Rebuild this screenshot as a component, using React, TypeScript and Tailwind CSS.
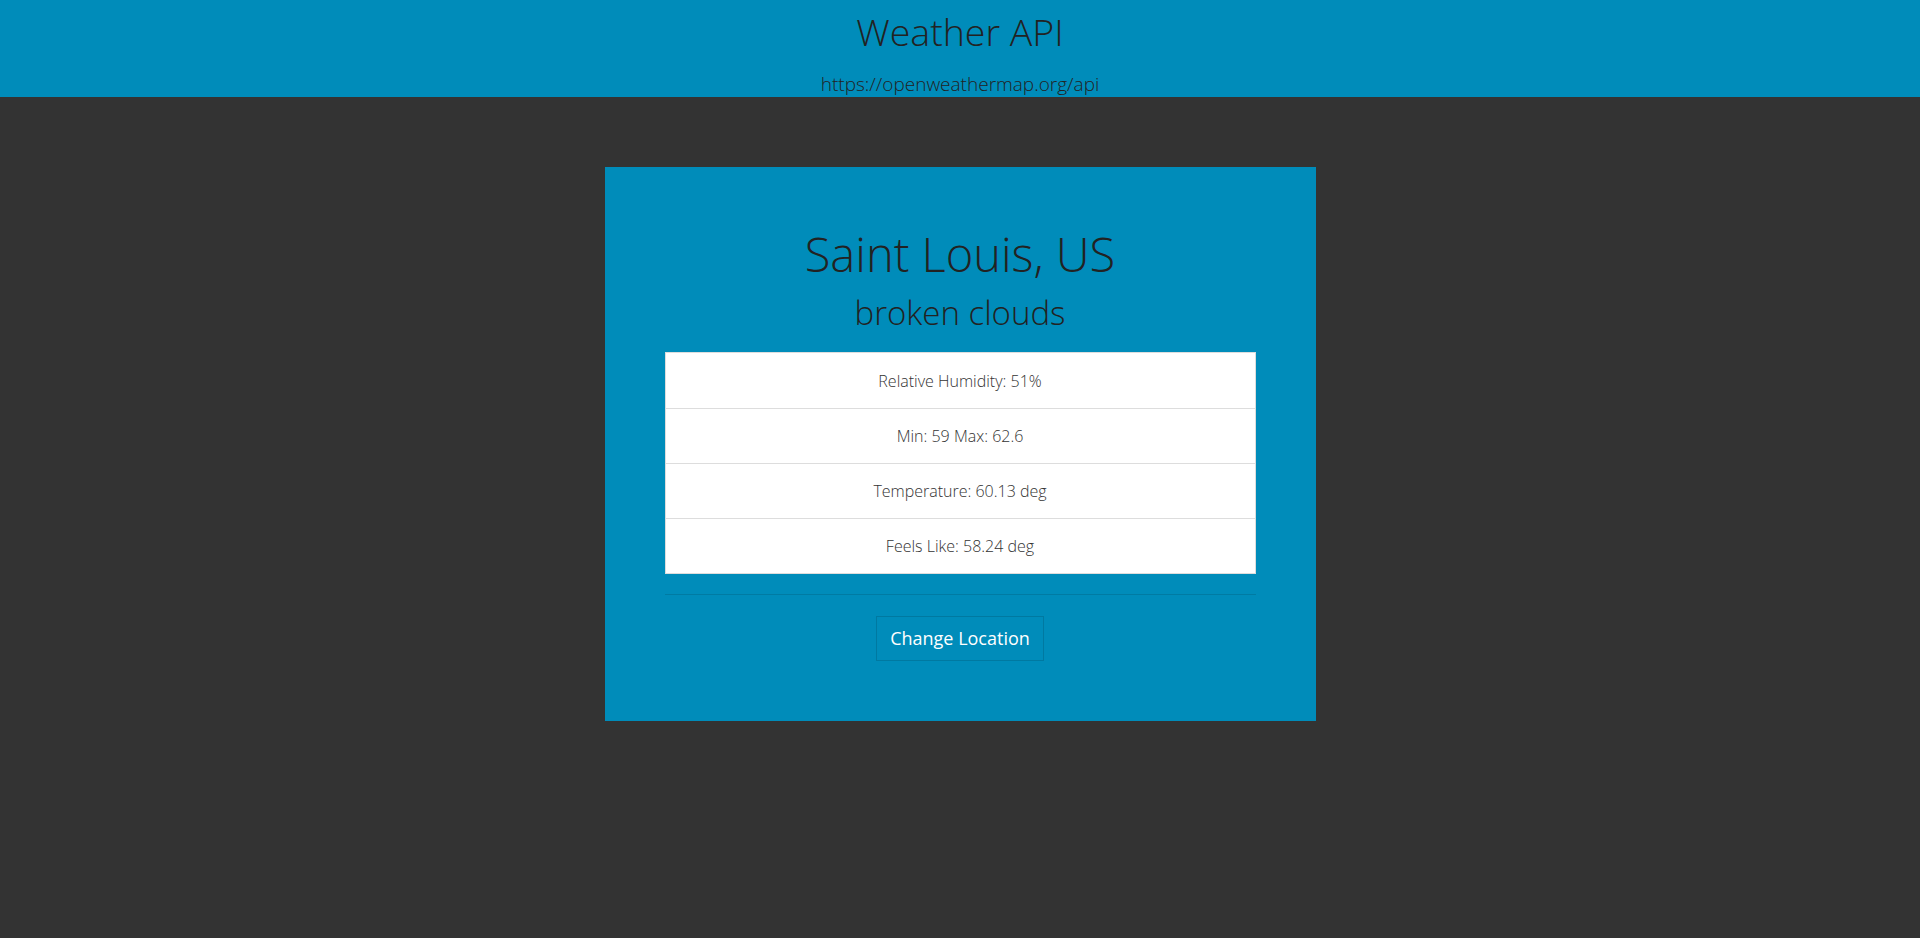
import React from "react";

export default function App() {
  const rows = [
    "Relative Humidity: 51%",
    "Min: 59 Max: 62.6",
    "Temperature: 60.13 deg",
    "Feels Like: 58.24 deg",
  ];
  return (
    <div
      className="min-h-screen w-full bg-[#333333]"
      style={{ fontFamily: '"Open Sans", "Liberation Sans", sans-serif' }}
    >
      <header className="h-[97px] overflow-hidden bg-[#008cba] pt-[12px] text-center text-[#222222]">
        <h1 className="text-[37.5px] font-light leading-[40px]">Weather API</h1>
        <p className="mt-[20px] text-[19px] font-light leading-[25px]">
          https://openweathermap.org/api
        </p>
      </header>
      <main className="pt-[70px]">
        <div className="mx-auto w-[711px] bg-[#008cba] px-[60px] pt-[61px] pb-[60px] text-center">
          <h2 className="text-[47px] font-light leading-[53px] text-[#222222]">
            Saint Louis, US
          </h2>
          <h3 className="mt-[14px] text-[33px] font-light leading-[35px] text-[#222222]">
            broken clouds
          </h3>
          <ul className="mt-[22px] border border-[#dddddd] bg-white">
            {rows.map((r, i) => (
              <li
                key={r}
                className={`flex h-[55px] items-center justify-center text-[16px] font-light text-[#333333] ${
                  i > 0 ? "border-t border-[#dddddd]" : ""
                }`}
              >
                {r}
              </li>
            ))}
          </ul>
          <hr className="mt-[20px] border-0 border-t border-[#007ba3]" />
          <div className="mt-[21px] flex justify-center">
            <button className="h-[45px] border border-[#0079a1] bg-[#008cba] px-[13px] text-[18px] leading-[25px] text-white">
              Change Location
            </button>
          </div>
        </div>
      </main>
    </div>
  );
}
